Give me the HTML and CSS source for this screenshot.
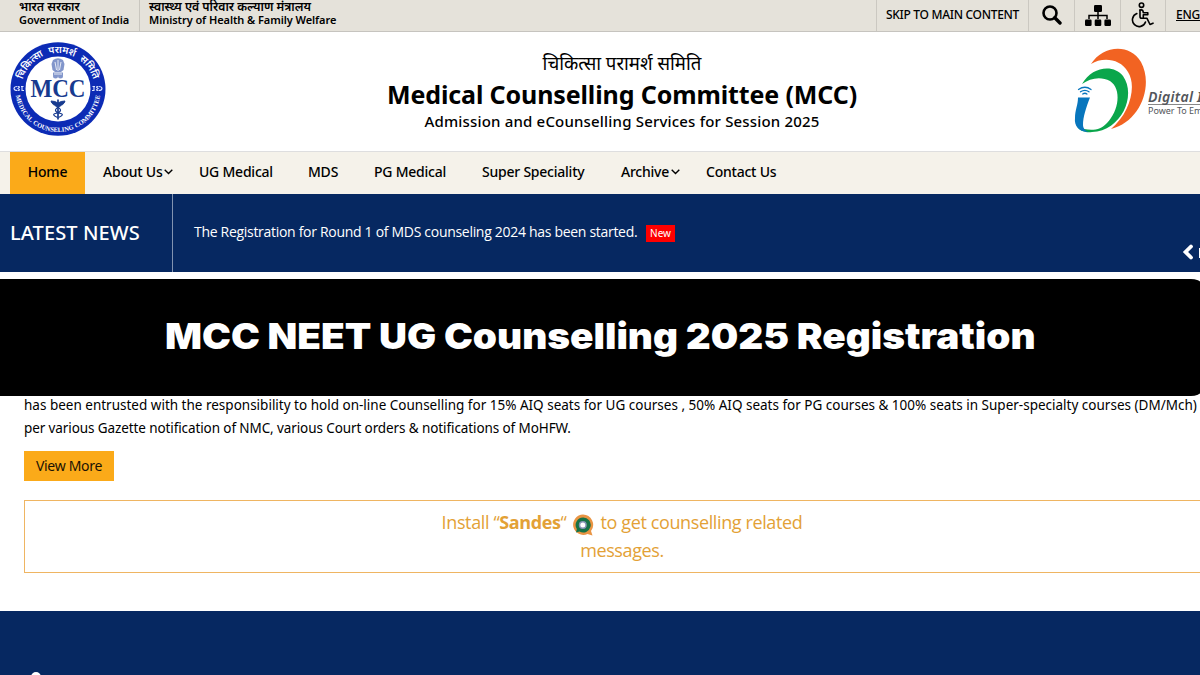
FILE: index.html
```html
<!DOCTYPE html>
<html lang="en">
<head>
  <meta charset="utf-8">
  <title>Medical Counselling Committee (MCC)</title>
  <link rel="stylesheet" href="styles.css">
</head>
<body>
  <div class="page">
    <div class="topbar">
      <div class="gov">
        <span lang="hi">भारत सरकार</span>
        <span>Government of India</span>
      </div>
      <div class="gov ministry">
        <span lang="hi">स्वास्थ्य एवं परिवार कल्याण मंत्रालय</span>
        <span>Ministry of Health &amp; Family Welfare</span>
      </div>
      <div class="tools">
        <a class="skip">SKIP TO MAIN CONTENT</a>
        <a class="tool search">
          <svg width="20" height="20" viewBox="0 0 20 20" fill="none" stroke="#000">
            <circle cx="8" cy="8" r="6.5" stroke-width="2.6"/>
            <path d="M12.8 12.8L18 18" stroke-width="3.4" stroke-linecap="round"/>
          </svg>
        </a>
        <a class="tool sitemap">
          <svg width="26" height="21" viewBox="0 0 26 21">
            <path d="M13 6v8M4 14v-3.500h18V14" fill="none" stroke="#000" stroke-width="1.5"/>
            <rect x="9" y="0" width="8" height="7" rx="1.2"/>
            <rect x="0" y="14.500" width="6.600" height="6.400" rx="1.2"/>
            <rect x="9.700" y="14.500" width="6.600" height="6.400" rx="1.2"/>
            <rect x="19.400" y="14.500" width="6.600" height="6.400" rx="1.2"/>
          </svg>
        </a>
        <a class="tool access">
          <svg width="24" height="26" viewBox="0 0 24 26" fill="none" stroke="#000" stroke-width="1.6" stroke-linecap="round" stroke-linejoin="round">
            <circle cx="11.500" cy="3.200" r="2.200"/>
            <path d="M10 8v6.500c0 1.200.6 1.800 1.800 1.800h5.200l3 6.200 3-1.300"/>
            <path d="M10 8c2.600-.6 3.200.7 3.300 2.800h4.500v2h-4.500v3"/>
            <path d="M6.800 11.600a6.700 6.700 0 1 0 8.700 8.400"/>
          </svg>
        </a>
        <a class="lang">ENGLISH</a>
      </div>
    </div>

    <header class="header">
      <svg class="mcc-logo" width="98" height="96" viewBox="0 0 98 96">
        <defs>
          <path id="arcTop" d="M12.500 47.500a36.500 36.500 0 0 1 73 0"/>
          <path id="arcBottom" d="M6.500 47.500a42.500 42.500 0 0 0 85 0"/>
        </defs>
        <ellipse cx="49" cy="47" rx="47.500" ry="46.700" fill="#0c2bb5"/>
        <circle cx="49" cy="47" r="32.500" fill="#fff"/>
        <text class="ring-hi" lang="hi"><textPath href="#arcTop" startOffset="50%" text-anchor="middle">चिकित्सा परामर्श समिति</textPath></text>
        <text class="ring-en"><textPath href="#arcBottom" startOffset="50%" text-anchor="middle">MEDICAL COUNSELING COMMITTEE</textPath></text>
        <g fill="none" stroke="#dce3ff" stroke-width="1.1">
          <path d="M8.500 44.500q-3.500 0-3.500 2t3.500 2M9 44.500q3 0 0 2 3 2 0 2M12 44.500h2.500M13 44.500v4h2"/>
          <path d="M89.500 44.500q3.500 0 3.500 2t-3.500 2M89 44.500q-3 0 0 2-3 2 0 2M86 44.500h-2.500M85 44.500v4h-2"/>
        </g>
        <!-- lion capital -->
        <g fill="#8296cb">
          <path d="M44 18q5-3.500 10 0l1.500 4-1 6-2.500 2h-6l-2.500-2-1-6z"/>
          <rect x="44" y="30.500" width="10" height="3"/>
          <circle cx="46.500" cy="34" r="2.500"/><circle cx="51.500" cy="34" r="2.500"/>
        </g>
        <path d="M46 20l1.500 8M49 18v11M52 20l-1.500 8M45 32h8" stroke="#fff" stroke-width=".8"/>
        <text class="mcc-text" x="49" y="54.500" text-anchor="middle" textLength="55" lengthAdjust="spacingAndGlyphs">MCC</text>
        <!-- caduceus -->
        <g stroke="#173a8f" fill="none">
          <path d="M49 57.500v20" stroke-width="1.700"/>
          <path d="M42 59q4 0 7 2 3-2 7-2-1.500 5-7 4.500-5.500.5-7-4.500z" fill="#173a8f"/>
          <path d="M46 63.500q6 3 5.500 5t-5 3 2 4M52 63.500q-6 3-5.500 5t5 3-2 4" stroke-width="1.200"/>
        </g>
      </svg>
      <div class="titles">
        <div class="title-hi" lang="hi">चिकित्सा परामर्श समिति</div>
        <h1>Medical Counselling Committee (MCC)</h1>
        <p>Admission and eCounselling Services for Session 2025</p>
      </div>
      <div class="digital">
        <svg width="74" height="86" viewBox="0 0 74 86">
          <path d="M17 16C28-2 55-6 67 14C80 38 66 74 37 81C56 65 63 38 54 24C46 10 28 9 17 16z" fill="#f26322"/>
          <path d="M8 36C18 18 40 16 49 28C63 48 47 83 18 84C12 85 5 83 3 78C14 84 26 83 33 75C45 63 48 41 36 33C27 28 16 30 8 36z" fill="#0aa64b"/>
          <path d="M4 49.500H16C12 60 9 69 9 77C9 80 11 83 15 84C5 84 0 78 1 70C1 62 4 57 4 49.500z" fill="#0876bd"/>
          <g fill="none" stroke="#0876bd" stroke-width="1.3" stroke-linecap="round">
            <path d="M4.500 41.500q6.500-4.500 12.500 0M6.500 43.800q4.500-3 8.500 0M8.700 46q2.300-1.500 4.200 0"/>
          </g>
        </svg>
        <div class="digital-text">
          <b>Digital India</b>
          <span>Power To Empower</span>
        </div>
      </div>
    </header>

    <nav class="nav">
      <a class="home">Home</a>
      <a class="about">About Us<svg width="9" height="6" viewBox="0 0 9 6"><path d="M.7.800l3.800 3.800L8.300.8"/></svg></a>
      <a class="ug">UG Medical</a>
      <a class="mds">MDS</a>
      <a class="pg">PG Medical</a>
      <a class="super">Super Speciality</a>
      <a class="archive">Archive<svg width="9" height="6" viewBox="0 0 9 6"><path d="M.7.800l3.800 3.800L8.300.8"/></svg></a>
      <a class="contact">Contact Us</a>
    </nav>

    <section class="news">
      <h2>LATEST NEWS</h2>
      <div class="news-item">
        <span class="news-text">The Registration for Round 1 of MDS counseling 2024 has been started.</span>
        <span class="badge">New</span>
      </div>
      <div class="news-controls">
        <svg width="12" height="16" viewBox="0 0 12 16"><path d="M9 2.500L3.500 8 9 13.500" fill="none" stroke="#fff" stroke-width="3.800" stroke-linecap="round"/></svg>
        <i class="pause"></i>
      </div>
    </section>

    <main class="content">
      <p class="intro"><span>has been entrusted with the responsibility to hold on-line Counselling for 15% AIQ seats for UG courses , 50% AIQ seats for PG courses &amp; 100% seats in Super-specialty courses (DM/Mch) , as</span><br><span class="line2">per various Gazette notification of NMC, various Court orders &amp; notifications of MoHFW.</span></p>
      <a class="view-more">View More</a>
      <div class="sandes">
        <div class="sandes-row">
          <span>Install “<b>Sandes</b>“</span>
          <svg width="22" height="22" viewBox="0 0 22 22">
            <path d="M11 .5a10.200 10.200 0 1 0 4.500 19.500l5 1.500-1.500-4.500A10.300 10.300 0 0 0 11 .5z" fill="#e99443"/>
            <path d="M11 3.500a7.500 7.500 0 1 1-3.500 14l-3.500 1 .8-3.500A7.500 7.500 0 0 1 11 3.500z" fill="#167246"/>
            <circle cx="10.800" cy="11" r="4" fill="#8795b5"/>
            <circle cx="10.800" cy="11" r="2.500" fill="#fff"/>
          </svg>
          <span>to get counselling related</span>
        </div>
        <div class="messages">messages.</div>
      </div>
    </main>

    <footer class="footer"><i class="dot"></i></footer>
  </div>

  <div class="banner"><span>MCC NEET UG Counselling 2025 Registration</span></div>
</body>
</html>
```

FILE: styles.css
```css
* {
  box-sizing: border-box;
}
body {
  margin: 0;
  height: 675px;
  overflow: hidden;
  position: relative;
  background: #fff;
  color: #000;
  font-family: "Noto Sans", "Open Sans", sans-serif;
}
/* the page is wider than the window and runs off its right side */
.page {
  width: 1244px;
}
h1, h2, p {
  margin: 0;
}
svg {
  display: block;
  flex: none;
}
a, span, h1, h2 {
  white-space: nowrap;
}

.topbar {
  display: flex;
  height: 32px;
  background: #e5e2da;
  border-bottom: 1px solid #c6c4bf;
}
.gov {
  display: flex;
  flex-direction: column;
  width: 140px;
  padding-left: 19px;
  border-right: 1px solid #c9c6bf;
  font-size: 11px;
  font-weight: 600;
  letter-spacing: -0.07px;
  line-height: 13px;
}
.gov span:lang(hi) {
  font-size: 12.200px;
  letter-spacing: 0;
}
.ministry {
  width: 300px;
  padding-left: 9px;
  border: none;
}
.tools {
  display: flex;
  margin-left: auto;
}
.tools a {
  display: flex;
  align-items: center;
  justify-content: center;
  border-left: 1px solid #cbc8c1;
}
.tools .skip {
  width: 152px;
  padding-bottom: 3px;
  font-size: 12px;
  font-weight: 500;
  letter-spacing: -0.3px;
}
.tool {
  width: 46px;
}
.tools .search {
  padding-bottom: 1px;
}
.tools .access {
  width: 45px;
  padding: 0 2px 1px 0;
}
.tools .lang {
  width: 79px;
  padding: 0 0 3px 10px;
  justify-content: flex-start;
  font-size: 12px;
  font-weight: 500;
  letter-spacing: -0.2px;
  text-decoration: underline;
}

.header {
  display: flex;
  height: 119px;
  padding-left: 9px;
}
.mcc-logo {
  margin-top: 10px;
}
.ring-hi {
  fill: #fff;
  font-size: 9.800px;
  font-weight: 600;
  word-spacing: 3px;
}
.ring-en {
  fill: #fff;
  font-family: "Liberation Serif", serif;
  font-size: 6.500px;
  font-weight: 700;
  word-spacing: 0.5px;
}
.mcc-text {
  fill: #173a8f;
  font-family: "Liberation Serif", serif;
  font-size: 25px;
  font-weight: 700;
}
.titles {
  flex: 1;
  padding: 17px 0 0 63px;
  text-align: center;
}
.title-hi {
  height: 27px;
  font-size: 18.600px;
  line-height: 27px;
}
.titles h1 {
  font-size: 25px;
  font-weight: 700;
  letter-spacing: -0.12px;
  line-height: 36px;
}
.titles p {
  font-size: 15px;
  font-weight: 500;
  letter-spacing: 0.18px;
  line-height: 18px;
}
.digital {
  display: flex;
  width: 170px;
  padding-top: 16px;
}
.digital-text {
  display: flex;
  flex-direction: column;
  padding-top: 41px;
  color: #53565b;
}
.digital-text b {
  font-size: 14px;
  font-style: italic;
  font-weight: 600;
  letter-spacing: 0.3px;
  line-height: 15px;
  border-bottom: 1px solid #888;
}
.digital-text span {
  font-size: 9px;
  line-height: 11px;
}

.nav {
  display: flex;
  height: 43px;
  padding-left: 10px;
  background: #f5f2ea;
  border-top: 1px solid #dededf;
  font-size: 14px;
  font-weight: 500;
  letter-spacing: -0.23px;
}
.nav a {
  display: flex;
  align-items: center;
  height: 42px;
  padding-bottom: 3px;
}
.nav svg {
  margin: 1px 0 0 2px;
  fill: none;
  stroke: #000;
  stroke-width: 1.400;
}
.nav .home {
  width: 75px;
  justify-content: center;
  background: #fbaa19;
}
.about {
  width: 114px;
  padding-left: 18px;
}
.ug {
  width: 109px;
}
.mds {
  width: 66px;
}
.pg {
  width: 108px;
}
.super {
  width: 139px;
}
.archive {
  width: 85px;
}

.news {
  display: flex;
  height: 78px;
  background: #062861;
  color: #fff;
}
.news h2 {
  width: 173px;
  padding-left: 10px;
  border-right: 1px solid #8193b0;
  font-size: 20px;
  font-weight: 500;
  letter-spacing: 0.1px;
  line-height: 78px;
}
.news-item {
  display: flex;
  align-items: flex-start;
  padding-left: 21px;
}
.news-text {
  width: 444px;
  font-family: "Open Sans", sans-serif;
  font-size: 14px;
  letter-spacing: -0.300px;
  line-height: 76px;
}
.badge {
  width: 29px;
  height: 17px;
  margin: 31px 0 0 8px;
  background: #f00;
  font-size: 10px;
  line-height: 17px;
  text-align: center;
}
.news-controls {
  display: flex;
  align-items: flex-start;
  width: 62px;
  margin-left: auto;
  padding-top: 50px;
}
.pause {
  width: 3px;
  height: 10px;
  margin: 4px 0 0 5px;
  background: #fff;
}

.content {
  height: 339px;
  padding: 122px 24px 0;
}
.intro {
  font-size: 13.500px;
  line-height: 23px;
}
.line2 {
  letter-spacing: -0.1px;
}
.view-more {
  display: block;
  width: 90px;
  height: 30px;
  margin-top: 11px;
  background: #fbaa19;
  color: #1a1204;
  font-size: 14px;
  letter-spacing: -0.3px;
  line-height: 30px;
  text-align: center;
}
.sandes {
  height: 73px;
  margin-top: 19px;
  padding-top: 7px;
  border: 1px solid #efb562;
  color: #e3a136;
  font-family: "Open Sans", sans-serif;
  font-size: 18px;
  letter-spacing: -0.38px;
  line-height: 28px;
  text-align: center;
}
.sandes-row {
  display: flex;
  justify-content: center;
}
.sandes svg {
  margin: 6px 7px 0 5px;
}

.footer {
  height: 64px;
  padding: 61px 0 0 31px;
  overflow: hidden;
  background: #062861;
}
.dot {
  display: block;
  width: 10px;
  height: 10px;
  border-radius: 50%;
  background: #fff;
}

/* headline strip laid over the page */
.banner {
  position: absolute;
  top: 279px;
  left: -20px;
  width: 1229px;
  height: 117px;
  padding-left: 185px;
  border-radius: 18px;
  background: #000;
  color: #fff;
  font-family: Inter, sans-serif;
  font-size: 36px;
  font-weight: 900;
  line-height: 115px;
}
.banner span {
  display: inline-block;
  transform: scaleX(1.075);
  transform-origin: left;
}
```
